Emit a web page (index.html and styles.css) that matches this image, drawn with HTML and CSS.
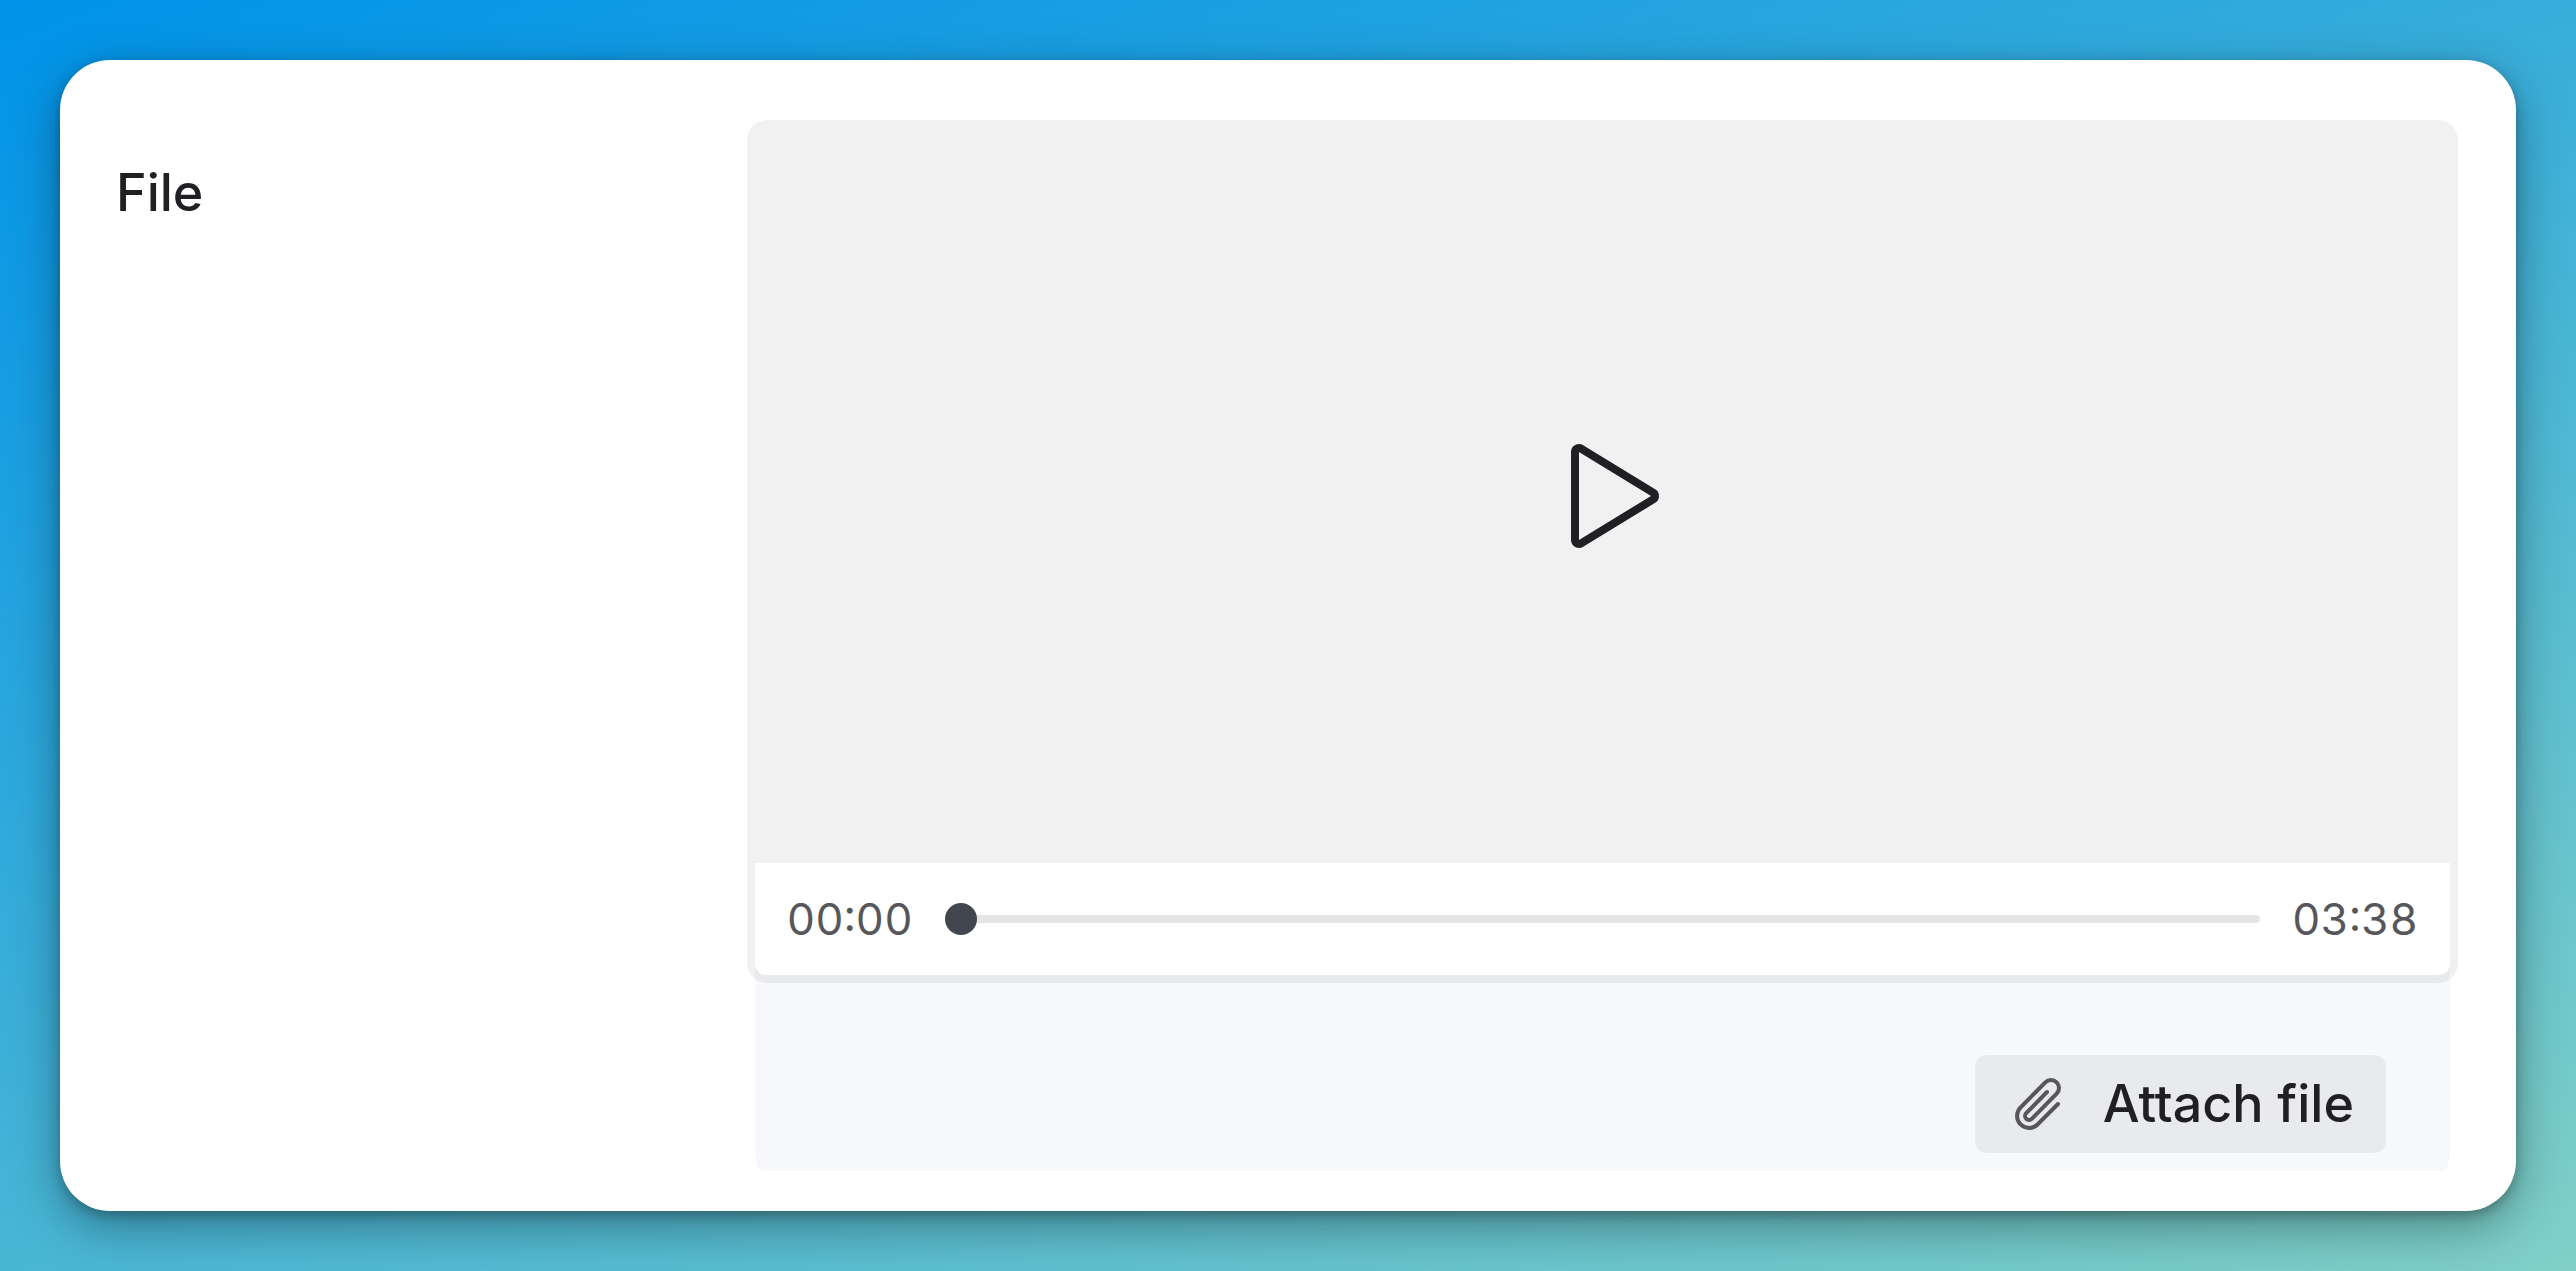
FILE: index.html
```html
<!DOCTYPE html>
<html lang="en">
<head>
  <meta charset="UTF-8">
  <meta name="viewport" content="width=device-width, initial-scale=1.0">
  <title>File</title>
  <link rel="stylesheet" href="styles.css">
</head>
<body>
  <main class="card">
    <h1 class="field-label" id="file-label">File</h1>

    <section class="field" aria-labelledby="file-label">
      <div class="player">
        <div class="stage">
          <button class="play" type="button" aria-label="Play">
            <svg class="play-icon" viewBox="0 0 256 256" aria-hidden="true">
              <path d="M72,39.88V216.12a8,8,0,0,0,12.15,6.69l144.08-88.12a7.82,7.82,0,0,0,0-13.38L84.15,33.19A8,8,0,0,0,72,39.88Z"/>
            </svg>
          </button>
        </div>
        <div class="controls">
          <span class="time">00:00</span>
          <input class="seek" type="range" min="0" max="218" value="0" aria-label="Seek">
          <span class="time">03:38</span>
        </div>
      </div>

      <div class="actions">
        <button class="attach" type="button">
          <svg class="clip-icon" viewBox="0 0 256 256" aria-hidden="true">
            <path d="M160,80,76.69,164.69a16,16,0,0,0,22.63,22.62L198.63,86.63a32,32,0,0,0-45.26-45.26L54.06,142.06a48,48,0,0,0,67.88,67.88L204,128"/>
          </svg>
          Attach file
        </button>
      </div>
    </section>
  </main>
</body>
</html>
```

FILE: styles.css
```css
* {
  box-sizing: border-box;
}

body {
  margin: 0;
  min-height: 100vh;
  padding: 60px;
  background: linear-gradient(160deg, #0093e9 0%, #80d0c7 100%);
  font-family: Inter, "Liberation Sans", sans-serif;
  color: #1f1f24;
}

.card {
  display: grid;
  grid-template-columns: 27fr 73fr;
  padding: 68px 66px 40px 56px;
  background: #fff;
  border-radius: 50px;
  box-shadow: 0 16px 50px rgba(0, 0, 0, 0.35), 0 4px 12px rgba(0, 0, 0, 0.25);
}

.field-label {
  margin: 32px 0 0;
  font-size: 52px;
  font-weight: 500;
  line-height: 66px;
}

.field {
  margin-left: 9px;
  background: #f7f8fc;
  border-radius: 12px 12px 8px 8px / 12px 12px 18px 18px;
}

.player {
  border-radius: 12px;
  box-shadow: 0 0 0 8px rgba(0, 0, 0, 0.055);
}

.stage {
  display: flex;
  justify-content: center;
  align-items: center;
  aspect-ratio: 53 / 23;
  background: #f1f1f1;
  border-radius: 12px 12px 0 0;
}

.play {
  padding: 0;
  border: none;
  background: none;
  cursor: pointer;
}

.play-icon,
.clip-icon {
  display: block;
  fill: none;
  stroke: #1f1f24;
  stroke-width: 16;
  stroke-linecap: round;
  stroke-linejoin: round;
}

.play-icon {
  width: 128px;
  height: 128px;
}

.controls {
  display: flex;
  align-items: center;
  gap: 32px;
  height: 112px;
  padding: 0 32px;
  background: #fff;
  border-radius: 0 0 12px 12px;
}

.time {
  font-size: 44px;
  font-variant-numeric: tabular-nums;
  color: #57575b;
}

.seek {
  flex: 1;
  min-width: 0;
  height: 32px;
  margin: 0;
  appearance: none;
  background: none;
  cursor: pointer;
}

.seek::-webkit-slider-runnable-track {
  height: 8px;
  background: #e5e5e5;
  border-radius: 4px;
}

.seek::-webkit-slider-thumb {
  appearance: none;
  width: 32px;
  height: 32px;
  margin-top: -12px;
  background: #42464f;
  border-radius: 50%;
}

.actions {
  display: flex;
  justify-content: flex-end;
  padding: 80px 64px 18px;
}

.attach {
  display: flex;
  align-items: center;
  gap: 32px;
  padding: 16px 32px;
  border: none;
  border-radius: 12px;
  background: #e9eaed;
  font-family: inherit;
  font-size: 52px;
  font-weight: 500;
  line-height: 66px;
  color: #1f1f24;
  cursor: pointer;
}

.clip-icon {
  width: 64px;
  height: 64px;
  stroke: #57575b;
}
```
